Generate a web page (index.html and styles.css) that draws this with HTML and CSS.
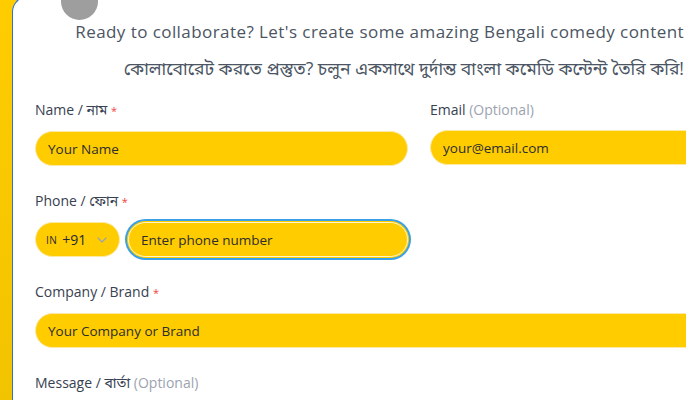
FILE: index.html
```html
<!DOCTYPE html>
<html lang="en">
<head>
<meta charset="utf-8">
<title>Contact</title>
<link rel="stylesheet" href="styles.css">
</head>
<body>
<div class="card">
  <span class="blob"></span>
  <header class="intro">
    <p class="intro-en">Ready to collaborate? Let's create some amazing Bengali comedy content</p>
    <p class="intro-bn">কোলাবোরেট করতে প্রস্তুত? চলুন একসাথে দুর্দান্ত বাংলা কমেডি কন্টেন্ট তৈরি করি!</p>
  </header>
  <form class="form">
    <div class="field">
      <label class="label">Name / <span class="bn">নাম</span> <span class="req">*</span></label>
      <input class="input" type="text" placeholder="Your Name">
    </div>
    <div class="field">
      <label class="label">Email <span class="opt">(Optional)</span></label>
      <input class="input" type="email" placeholder="your@email.com">
    </div>
    <div class="field">
      <label class="label">Phone / <span class="bn">ফোন</span> <span class="req">*</span></label>
      <div class="phone-row">
        <div class="country">
          <span class="cc">IN</span><span class="dial">+91</span>
          <svg class="chev" width="10" height="6" viewBox="0 0 10 6"><path d="M1 1l4 4 4-4" fill="none" stroke="#9ca3af" stroke-width="1.2" stroke-linecap="round" stroke-linejoin="round"/></svg>
        </div>
        <input class="input phone focus" type="tel" placeholder="Enter phone number">
      </div>
    </div>
    <div class="field"></div>
    <div class="field wide">
      <label class="label">Company / Brand <span class="req">*</span></label>
      <input class="input" type="text" placeholder="Your Company or Brand">
    </div>
    <div class="field wide">
      <label class="label">Message / <span class="bn">বার্তা</span> <span class="opt">(Optional)</span></label>
    </div>
  </form>
</div>
</body>
</html>
```
FILE: styles.css
```css
html, body {
  margin: 0;
  height: 100%;
  overflow: hidden;
}
body {
  background: linear-gradient(180deg, #ffcc00 0%, #f2c300 100%);
  padding-left: 12px;
  font-family: "Open Sans", "Noto Sans", "Noto Sans Bengali", sans-serif;
}
.card {
  position: relative;
  margin-top: -4px;
  min-height: 420px;
  background: #ffffff;
  border-left: 1px solid #2f6fd8;
  border-top: 1px solid #2f6fd8;
  border-top-left-radius: 16px;
}
.blob {
  position: absolute;
  left: 48px;
  top: -14px;
  width: 37px;
  height: 37px;
  border-radius: 50%;
  background: #9e9e9e;
}
.intro {
  text-align: right;
  padding: 23px 2px 0 0;
  color: #4b5563;
}
.intro p {
  margin: 0;
  white-space: nowrap;
}
.intro-en {
  font-size: 17px;
  letter-spacing: 0.43px;
  line-height: 24px;
}
.intro-bn {
  font-size: 17.5px;
  line-height: 24px;
  margin-top: 12px !important;
}
.form {
  display: grid;
  grid-template-columns: 373px 373px;
  column-gap: 22px;
  row-gap: 25px;
  padding: 20px 0 0 22px;
}
.field {
  display: flex;
  flex-direction: column;
  gap: 10px;
}
.wide {
  grid-column: 1 / -1;
}
.label {
  font-size: 14px;
  line-height: 20px;
  font-weight: 500;
  color: #374151;
}
.bn {
  font-weight: 400;
}
.req {
  color: #ef4444;
  font-size: 11px;
}
.opt {
  color: #9ca3af;
  font-weight: 400;
}
.input {
  box-sizing: border-box;
  height: 35px;
  width: 100%;
  border: 1px solid #fbe9a6;
  border-radius: 18px;
  background: #ffcc00;
  padding: 0 12px;
  font-family: inherit;
  font-size: 13.5px;
  color: #1f2937;
  outline: none;
}
.input::placeholder {
  color: #2d2d2d;
  opacity: 1;
}
.phone-row {
  display: flex;
  gap: 8px;
}
.country {
  box-sizing: border-box;
  flex: 0 0 85px;
  height: 35px;
  border-radius: 18px;
  background: #ffcc00;
  border: 1px solid #fbe9a6;
  display: flex;
  align-items: center;
  padding-left: 10px;
  color: #1f2937;
}
.cc {
  font-size: 10px;
  letter-spacing: 0.5px;
  margin-right: 5px;
}
.dial {
  font-size: 14px;
}
.chev {
  margin-left: auto;
  margin-right: 12px;
}
.phone {
  flex: 1;
}
.focus {
  border-color: #fff6cc;
  box-shadow: 0 0 0 1px #ffcc00, 0 0 0 3px #3aa0e8;
}
```
